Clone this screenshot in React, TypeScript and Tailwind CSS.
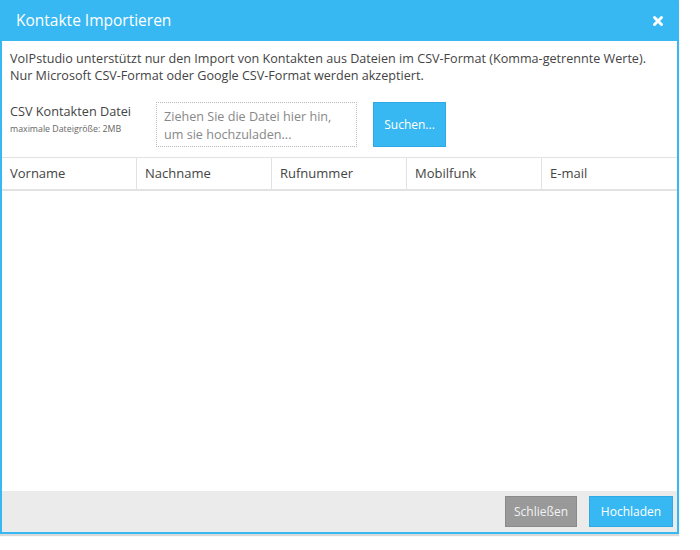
import { X } from 'lucide-react';

const columns = ['Vorname', 'Nachname', 'Rufnummer', 'Mobilfunk', 'E-mail'];

export default function App() {
    return (
        <div className="w-[700px] h-[550px] bg-white font-['Open_Sans',sans-serif] text-[#444]">
            <div className="w-[679px] h-[534px] flex flex-col shadow-[0_2px_1px_rgba(0,0,0,0.15)]">
                <div className="h-[41px] bg-[#38b8f2] flex items-center justify-between pl-4 pr-[14px] shrink-0">
                    <h1 className="text-[15.5px] text-white">Kontakte Importieren</h1>
                    <X className="h-[14px] w-[14px] text-white" strokeWidth={5} />
                </div>
                <div className="flex-1 flex flex-col border-x-2 border-b-2 border-[#38b8f2] min-h-0">
                    <div className="flex-1 flex flex-col bg-white">
                        <p className="px-2 pt-[9px] text-[12.6px] leading-[17px]">
                            VoIPstudio unterstützt nur den Import von Kontakten aus Dateien im CSV-Format (Komma-getrennte Werte).
                            <br />
                            Nur Microsoft CSV-Format oder Google CSV-Format werden akzeptiert.
                        </p>
                        <div className="flex items-start pl-2 pt-[18px] pb-[10px]">
                            <div className="w-[146px] pt-[1px]">
                                <div className="text-[12.7px] leading-[16px]">CSV Kontakten Datei</div>
                                <div className="text-[8.8px] leading-[12px] text-[#666] mt-[4px]">maximale Dateigröße: 2MB</div>
                            </div>
                            <div className="w-[201px] h-[45px] border border-dotted border-[#bbb] px-[7px] pt-[5px] text-[12.6px] leading-[18px] text-[#888]">
                                Ziehen Sie die Datei hier hin,
                                <br />
                                um sie hochzuladen...
                            </div>
                            <button className="ml-4 w-[73px] h-[45px] bg-[#38b8f2] border border-[#2fa9e4] text-white text-[12px]">
                                Suchen...
                            </button>
                        </div>
                        <div className="grid grid-cols-5 border-t border-b-2 border-[#e2e2e2] h-[34px]">
                            {columns.map((c, i) => (
                                <div
                                    key={c}
                                    className={`flex items-center px-2 text-[13px] ${i < 4 ? 'border-r border-[#e2e2e2]' : ''}`}
                                >
                                    {c}
                                </div>
                            ))}
                        </div>
                        <div className="flex-1" />
                    </div>
                    <div className="h-[41px] bg-[#ebebeb] flex items-center justify-end gap-3 pr-[4px] shrink-0">
                        <button className="w-[72px] h-[31px] bg-[#999] border border-[#8a8a8a] text-[#f2f2f2] text-[12px]">
                            Schließen
                        </button>
                        <button className="w-[84px] h-[31px] bg-[#38b8f2] border border-[#2fa9e4] text-white text-[12px]">
                            Hochladen
                        </button>
                    </div>
                </div>
            </div>
        </div>
    );
}
